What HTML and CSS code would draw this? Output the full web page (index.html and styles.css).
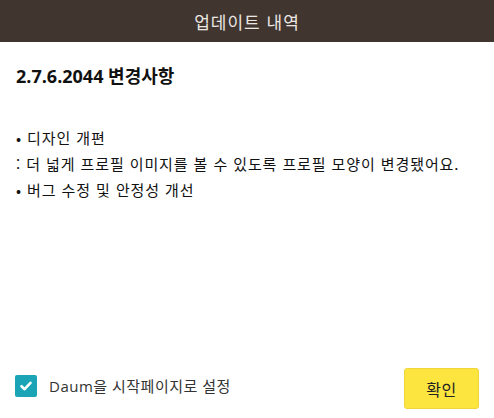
FILE: index.html
```html
<!DOCTYPE html>
<html lang="ko">
<head>
<meta charset="utf-8">
<link rel="stylesheet" href="styles.css">
</head>
<body>
<div class="dialog">
  <header class="titlebar">업데이트 내역</header>
  <main class="content">
    <h1 class="version">2.7.6.2044 변경사항</h1>
    <ul class="notes">
      <li>• 디자인 개편</li>
      <li>: 더 넓게 프로필 이미지를 볼 수 있도록 프로필 모양이 변경됐어요.</li>
      <li>• 버그 수정 및 안정성 개선</li>
    </ul>
  </main>
  <footer class="footer">
    <label class="check">
      <span class="box">
        <svg width="14" height="14" viewBox="0 0 14 14"><path d="M2.5 7.2 L5.6 10.2 L11.5 3.8" fill="none" stroke="#fff" stroke-width="2.6" stroke-linecap="round" stroke-linejoin="round"/></svg>
      </span>
      <span class="check-label">Daum을 시작페이지로 설정</span>
    </label>
    <button class="ok">확인</button>
  </footer>
</div>
</body>
</html>
```
FILE: styles.css
```css
html, body {
  margin: 0;
  padding: 0;
  background: #fff;
}
body {
  font-family: "Open Sans", "Noto Sans CJK KR", sans-serif;
}
.dialog {
  height: 418px;
  display: flex;
  flex-direction: column;
}
.titlebar {
  height: 42px;
  background: #413530;
  color: #ebe7e4;
  font-size: 17px;
  display: flex;
  align-items: center;
  justify-content: center;
  font-family: "Noto Sans CJK KR", sans-serif;
  letter-spacing: 1px;
}
.content {
  flex: 1;
  padding: 20px 16px 0;
}
.version {
  margin: 0;
  font-size: 18px;
  font-weight: 700;
  color: #111;
  line-height: 28px;
}
.notes {
  list-style: none;
  margin: 35px 0 0;
  padding: 0;
  font-size: 15px;
  line-height: 26px;
  color: #111;
  letter-spacing: 0.9px;
  font-family: "Noto Sans CJK KR", sans-serif;
}
.footer {
  display: flex;
  align-items: center;
  justify-content: space-between;
  padding: 0 15px 9px 15px;
  height: 41px;
}
.check {
  display: flex;
  align-items: center;
  gap: 12px;
  margin-top: -6px;
}
.box {
  width: 22px;
  height: 22px;
  border-radius: 2px;
  background: #1aa4b6;
  display: flex;
  align-items: center;
  justify-content: center;
}
.check-label {
  font-size: 15px;
  color: #333;
  letter-spacing: 0.5px;
}
.ok {
  width: 75px;
  height: 41px;
  background: #fde540;
  border: 1px solid #f0d63a;
  border-radius: 3px;
  font-family: "Noto Sans CJK KR", sans-serif;
  font-size: 16px;
  color: #222;
  padding: 0;
  letter-spacing: 0.5px;
}
```
